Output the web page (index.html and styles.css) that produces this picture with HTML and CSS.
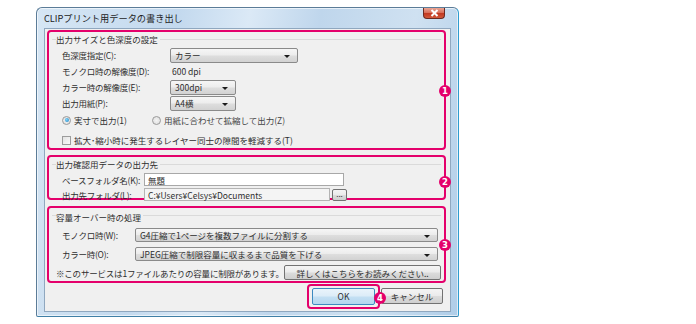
FILE: index.html
```html
<!DOCTYPE html>
<html lang="ja">
<head>
<meta charset="utf-8">
<title>CLIPプリント用データの書き出し</title>
<link rel="stylesheet" href="styles.css">
</head>
<body>
<div class="window">
  <div class="titlebar">
    <span class="title">CLIPプリント用データの書き出し</span>
    <span class="close"><svg width="9" height="8" viewBox="0 0 9 8"><path d="M1.5 1 L7.5 7 M7.5 1 L1.5 7" stroke="#fff" stroke-width="2"/></svg></span>
  </div>
  <div class="client">
    <section class="group g1">
      <div class="gtitle"><span>出力サイズと色深度の設定</span></div>
      <div class="row r16"><span class="lbl w1">色深度指定(C):</span><span class="combo c-wide">カラー</span></div>
      <div class="row r16"><span class="lbl w1">モノクロ時の解像度(D):</span><span class="val">600 dpi</span></div>
      <div class="row r16"><span class="lbl w1">カラー時の解像度(E):</span><span class="combo c-small">300dpi</span></div>
      <div class="row r16"><span class="lbl w1">出力用紙(P):</span><span class="combo c-small">A4横</span></div>
      <div class="row radios">
        <span class="opt"><span class="radio on"></span>実寸で出力(1)</span>
        <span class="opt opt2"><span class="radio"></span>用紙に合わせて拡縮して出力(Z)</span>
      </div>
      <div class="row check"><span class="box"></span>拡大･縮小時に発生するレイヤー同士の隙間を軽減する(T)</div>
      <span class="badge b1">1</span>
    </section>
    <section class="group g2">
      <div class="gtitle"><span>出力確認用データの出力先</span></div>
      <div class="row r14"><span class="lbl w2">ベースフォルダ名(K):</span><span class="input in1">無題</span></div>
      <div class="row r14"><span class="lbl w2">出力先フォルダ(L):</span><span class="input in2">C:¥Users¥Celsys¥Documents</span><span class="btn dots">...</span></div>
      <span class="badge b2">2</span>
    </section>
    <section class="group g3">
      <div class="gtitle"><span>容量オーバー時の処理</span></div>
      <div class="row r19"><span class="lbl w3">モノクロ時(W):</span><span class="combo c-full">G4圧縮で1ページを複数ファイルに分割する</span></div>
      <div class="row r19"><span class="lbl w3">カラー時(O):</span><span class="combo c-full">JPEG圧縮で制限容量に収まるまで品質を下げる</span></div>
      <div class="row r19 note"><span class="notetext">※このサービスは1ファイルあたりの容量に制限があります。</span><span class="btn more">詳しくはこちらをお読みください..</span></div>
      <span class="badge b3">3</span>
    </section>
    <div class="actions">
      <span class="okwrap"><span class="btn ok">OK</span><span class="badge b4">4</span></span>
      <span class="btn cancel">キャンセル</span>
    </div>
  </div>
</div>
</body>
</html>
```
FILE: styles.css
```css
html, body {
  margin: 0;
  padding: 0;
  background: #fff;
}
body {
  width: 696px;
  height: 324px;
  overflow: hidden;
  font-family: "Noto Sans CJK JP", "Noto Sans", sans-serif;
  font-size: 8.5px;
  color: #2e2e2e;
  white-space: nowrap;
}
.window {
  box-sizing: border-box;
  margin: 7px 0 0 36px;
  width: 423px;
  height: 310px;
  border: 1px solid #5b7c98;
  border-right-color: #2f9ccf;
  border-bottom-color: #3f7fa6;
  border-radius: 6px 6px 2px 2px;
  background: linear-gradient(100deg, #d6e6f4 0%, #c3d9ee 30%, #dbe9f6 45%, #bfd6ec 60%, #cfe1f1 80%, #afcde8 100%);
  padding: 0 7px 4px 7px;
  display: flex;
  flex-direction: column;
  box-shadow: inset 0 0 0 1px rgba(255,255,255,0.6);
}
.titlebar {
  height: 20px;
  display: flex;
  align-items: center;
  position: relative;
}
.title {
  font-size: 9.2px;
  color: #1d1d1d;
}
.close {
  position: absolute;
  right: 6px;
  top: 0;
  width: 22px;
  height: 11px;
  border: 1px solid #6b2a22;
  border-top: none;
  border-radius: 0 0 4px 4px;
  background: linear-gradient(#e9a594 0%, #d9705c 45%, #c23a22 55%, #d2583a 100%);
  display: flex;
  align-items: center;
  justify-content: center;
  box-sizing: border-box;
}
.client {
  flex: 1;
  background: #f0f0f0;
  border: 1px solid #8fa7bf;
  padding: 1px 4px 0 2px;
  display: flex;
  flex-direction: column;
}
.group {
  position: relative;
  border: 2px solid #e4006b;
  border-radius: 4px;
  box-sizing: border-box;
  padding: 0 0 0 7px;
}
.group::before {
  content: "";
  position: absolute;
  left: 3px;
  right: 3px;
  top: 7px;
  height: 1px;
  background: #dadada;
}
.g1 { height: 120px; }
.g2 { height: 45px; margin-top: 5px; }
.g3 { height: 77px; margin-top: 6px; }
.gtitle {
  height: 12px;
  line-height: 12px;
  margin-top: 1px;
  position: relative;
  z-index: 1;
  display: flex;
}
.gtitle span {
  background: #f0f0f0;
  padding-right: 2px;
}
.row {
  display: flex;
  align-items: center;
  padding-left: 6px;
}
.r16 { height: 16px; }
.g1 .gtitle + .row { margin-top: 2px; }
.lbl { flex: none; letter-spacing: -0.25px; }
.w1 { width: 108px; }
.w2 { width: 82px; }
.w3 { width: 73px; }
.val { padding-left: 2px; }
.combo {
  box-sizing: border-box;
  height: 15px;
  border: 1px solid #8a8a8a;
  border-radius: 2px;
  background: linear-gradient(#f6f6f6 0%, #ececec 48%, #dedede 52%, #d2d2d2 100%);
  display: flex;
  align-items: center;
  padding-left: 4px;
  position: relative;
}
.combo::after {
  content: "";
  position: absolute;
  right: 7px;
  top: 6px;
  border-left: 3px solid transparent;
  border-right: 3px solid transparent;
  border-top: 3px solid #1a1a1a;
}
.c-wide { width: 128px; }
.c-small { width: 66px; }
.c-full { width: 303px; height: 14px; }
.radios { height: 16px; margin-top: 1px; }
.opt { display: flex; align-items: center; }
.opt2 { margin-left: 25px; color: #444; }
.radio {
  width: 9px;
  height: 9px;
  border-radius: 50%;
  border: 1px solid #9a9a9a;
  box-sizing: border-box;
  background: radial-gradient(circle, #f4f4f4 0%, #dcdcdc 100%);
  margin-right: 3px;
  position: relative;
}
.radio.on::after {
  content: "";
  position: absolute;
  left: 1.5px;
  top: 1.5px;
  width: 4px;
  height: 4px;
  border-radius: 50%;
  background: radial-gradient(circle at 40% 40%, #7fd4f8, #1a7fc4);
}
.check { height: 16px; margin-top: 4px; }
.box {
  width: 9px;
  height: 9px;
  border: 1px solid #9c9c9c;
  box-sizing: border-box;
  background: linear-gradient(135deg, #e2e2e2, #fafafa);
  margin-right: 3px;
}
.r14 { height: 15px; }
.g2 .gtitle + .row { margin-top: 2px; }
.input {
  box-sizing: border-box;
  height: 13px;
  border: 1px solid #a8a8a8;
  background: #fff;
  display: flex;
  align-items: center;
  padding-left: 3px;
}
.in1 { width: 200px; }
.in2 { width: 186px; background: #f4f4f4; border-color: #b4b4b4; }
.btn {
  box-sizing: border-box;
  border: 1px solid #727272;
  border-radius: 2px;
  background: linear-gradient(#f4f4f4 0%, #ebebeb 48%, #dcdcdc 52%, #cfcfcf 100%);
  display: flex;
  align-items: center;
  justify-content: center;
}
.dots { width: 15px; height: 12px; margin-left: 2px; line-height: 8px; align-items: flex-start; font-size: 8px; }
.g3 .gtitle { margin-top: 3px; }
.r19 { height: 19px; }
.g3 .gtitle + .row { margin-top: 2px; }
.note { padding-left: 0; justify-content: space-between; padding-right: 3px; }
.notetext { letter-spacing: -0.2px; }
.more { width: 157px; height: 15px; }
.badge {
  position: absolute;
  width: 12px;
  height: 12px;
  border-radius: 50%;
  background: #e4006b;
  color: #fff;
  font-family: "DejaVu Sans", sans-serif;
  font-weight: bold;
  font-size: 8.5px;
  line-height: 12px;
  text-align: center;
  z-index: 2;
}
.b1 { right: -7px; top: 53px; }
.b2 { right: -7px; top: 19px; }
.b3 { right: -7px; top: 31px; }
.actions {
  display: flex;
  justify-content: flex-end;
  align-items: center;
  height: 26px;
}
.okwrap {
  position: relative;
  border: 2px solid #e4006b;
  border-radius: 4px;
  padding: 2px 3px;
  display: flex;
}
.ok {
  width: 63px;
  height: 17px;
  border-color: #3c8ac0;
  background: linear-gradient(#eaf4fb 0%, #dcecf8 48%, #c4e0f3 52%, #b4d6ef 100%);
}
.b4 { right: -8px; top: 6px; }
.cancel {
  width: 62px;
  height: 16px;
  margin-left: 1px;
  margin-right: 3px;
}
```
